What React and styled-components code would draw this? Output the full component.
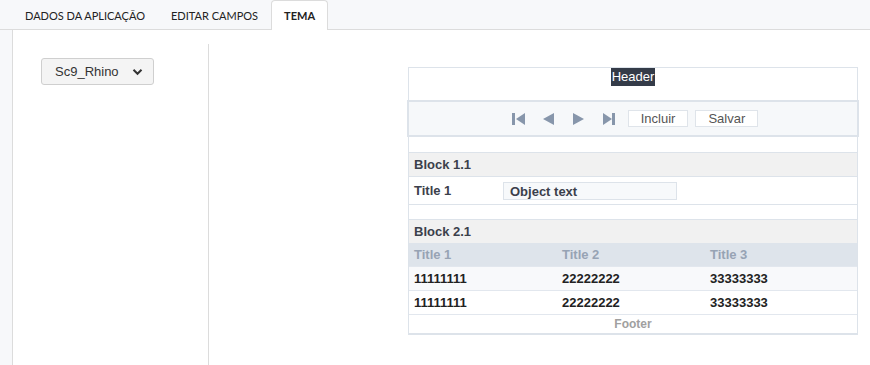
import styled, { createGlobalStyle } from "styled-components";

const Global = createGlobalStyle`
  body {
    margin: 0;
    background: #f7f8fa;
    font-family: "Liberation Sans", Arial, sans-serif;
  }
`;

const abas = ["DADOS DA APLICAÇÃO", "EDITAR CAMPOS", "TEMA"];

export default function App() {
  return (
    <>
      <Global />
      <Pagina>
        <Abas>
          {abas.map((aba) => (
            <Aba key={aba} $ativa={aba === "TEMA"}>
              {aba}
            </Aba>
          ))}
        </Abas>
        <Painel>
          <Esquerda>
            <Seletor>
              <span>Sc9_Rhino</span>
              <svg width="11" height="8" viewBox="0 0 11 8">
                <path d="M1.5 1.8 L5.5 5.8 L9.5 1.8" fill="none" stroke="#333" strokeWidth="2" />
              </svg>
            </Seletor>
          </Esquerda>
          <Direita>
            <Previa>
              <Cabecalho>
                <span>Header</span>
              </Cabecalho>
              <Barra>
                <Navegacao>
                  <svg width="14" height="14" viewBox="0 0 14 14">
                    <rect x="0" y="1" width="3" height="12" fill="#8796ab" />
                    <path d="M13 1 L4 7 L13 13 Z" fill="#8796ab" />
                  </svg>
                  <svg width="14" height="14" viewBox="0 0 14 14">
                    <path d="M12 1 L1 7 L12 13 Z" fill="#8796ab" />
                  </svg>
                  <svg width="14" height="14" viewBox="0 0 14 14">
                    <path d="M1 1 L12 7 L1 13 Z" fill="#8796ab" />
                  </svg>
                  <svg width="14" height="14" viewBox="0 0 14 14">
                    <path d="M1 1 L10 7 L1 13 Z" fill="#8796ab" />
                    <rect x="10" y="1" width="3" height="12" fill="#8796ab" />
                  </svg>
                </Navegacao>
                <Botao>Incluir</Botao>
                <Botao>Salvar</Botao>
              </Barra>
              <Bloco>
                <TituloBloco>Block 1.1</TituloBloco>
                <Campo>
                  <Rotulo>Title 1</Rotulo>
                  <Objeto>Object text</Objeto>
                </Campo>
              </Bloco>
              <Bloco>
                <TituloBloco>Block 2.1</TituloBloco>
                <Linha $tipo="titulo">
                  <span>Title 1</span>
                  <span>Title 2</span>
                  <span>Title 3</span>
                </Linha>
                <Linha $tipo="par">
                  <span>11111111</span>
                  <span>22222222</span>
                  <span>33333333</span>
                </Linha>
                <Linha>
                  <span>11111111</span>
                  <span>22222222</span>
                  <span>33333333</span>
                </Linha>
                <Rodape>Footer</Rodape>
              </Bloco>
            </Previa>
          </Direita>
        </Painel>
      </Pagina>
    </>
  );
}

const Pagina = styled.div`
  width: 870px;
  height: 365px;
  overflow: hidden;
`;

const Abas = styled.div`
  display: flex;
  align-items: flex-end;
  height: 30px;
  padding-left: 12px;
  border-bottom: 1px solid #dcdcdc;
  box-sizing: border-box;
  font-family: Lato, "Open Sans", sans-serif;
  font-size: 11px;
`;

const Aba = styled.div`
  height: 29px;
  line-height: 29px;
  padding: 0 12px;
  margin-bottom: -1px;
  color: #222;
  font-weight: ${(p) => (p.$ativa ? 700 : 400)};
  background: ${(p) => (p.$ativa ? "#fff" : "transparent")};
  border: 1px solid ${(p) => (p.$ativa ? "#dcdcdc" : "transparent")};
  border-bottom: none;
  border-radius: 4px 4px 0 0;
`;

const Painel = styled.div`
  display: flex;
  margin-left: 12px;
  height: 335px;
  background: #fff;
  border-left: 1px solid #dcdcdc;
`;

const Esquerda = styled.div`
  width: 196px;
  margin-top: 14px;
  padding: 14px 0 0 28px;
  box-sizing: border-box;
  border-right: 1px solid #dcdcdc;
`;

const Seletor = styled.div`
  display: flex;
  align-items: center;
  justify-content: space-between;
  width: 113px;
  height: 27px;
  padding: 0 10px 0 13px;
  box-sizing: border-box;
  background: #f4f4f4;
  border: 1px solid #cfcfcf;
  border-radius: 3px;
  font-size: 13px;
  color: #333;
`;

const Direita = styled.div`
  flex: 1;
  display: flex;
  justify-content: flex-end;
  align-items: flex-start;
  padding: 37px 12px 0 0;
`;

const Previa = styled.div`
  width: 450px;
  box-sizing: border-box;
  border: 1px solid #dde3ea;
  background: #fff;
  font-size: 13px;
`;

const Cabecalho = styled.div`
  height: 32px;
  text-align: center;

  span {
    display: inline-block;
    padding: 1px 1px 2px;
    background: #343b48;
    color: #fff;
  }
`;

const Barra = styled.div`
  display: flex;
  align-items: center;
  justify-content: center;
  gap: 7px;
  height: 37px;
  margin: 0 -2px;
  box-sizing: border-box;
  border: 2px solid #dde3ea;
  background: #f6f8fa;
  padding-left: 4px;
`;

const Navegacao = styled.div`
  display: flex;
  gap: 16px;
  margin-right: 5px;

  svg {
    display: block;
  }
`;

const Botao = styled.div`
  height: 17px;
  line-height: 16px;
  padding: 0 12px;
  box-sizing: border-box;
  background: #fff;
  border: 1px solid #dfe4ea;
  color: #555;
  font-size: 13px;
`;

const Bloco = styled.div`
  margin-top: 15px;
  border-top: 1px solid #dde3ea;
  border-bottom: 1px solid #dde3ea;
  font-weight: 700;

  & + & {
    margin-top: 14px;
  }
`;

const TituloBloco = styled.div`
  height: 23px;
  line-height: 23px;
  padding-left: 5px;
  background: #f1f1f1;
  color: #3b404b;
`;

const Campo = styled.div`
  display: flex;
  align-items: center;
  height: 27px;
  padding-left: 5px;
  border-top: 1px solid #dde3ea;
  color: #3b404b;
`;

const Rotulo = styled.span`
  width: 89px;
`;

const Objeto = styled.span`
  width: 174px;
  height: 18px;
  line-height: 17px;
  padding-left: 6px;
  box-sizing: border-box;
  background: #f7f9fb;
  border: 1px solid #dde3ea;
`;

const Linha = styled.div`
  display: grid;
  grid-template-columns: 148px 148px 1fr;
  height: 23px;
  line-height: 23px;
  padding-left: 5px;
  background: ${(p) =>
    p.$tipo === "titulo" ? "#dee4eb" : p.$tipo === "par" ? "#f8f9fb" : "#fff"};
  color: ${(p) => (p.$tipo === "titulo" ? "#97a3b4" : "#222")};
  border-top: ${(p) => (p.$tipo === "titulo" ? "none" : "1px solid #e2e7ee")};
`;

const Rodape = styled.div`
  height: 18px;
  line-height: 18px;
  border-top: 1px solid #e2e7ee;
  text-align: center;
  font-size: 12px;
  color: #a0a0a0;
`;
